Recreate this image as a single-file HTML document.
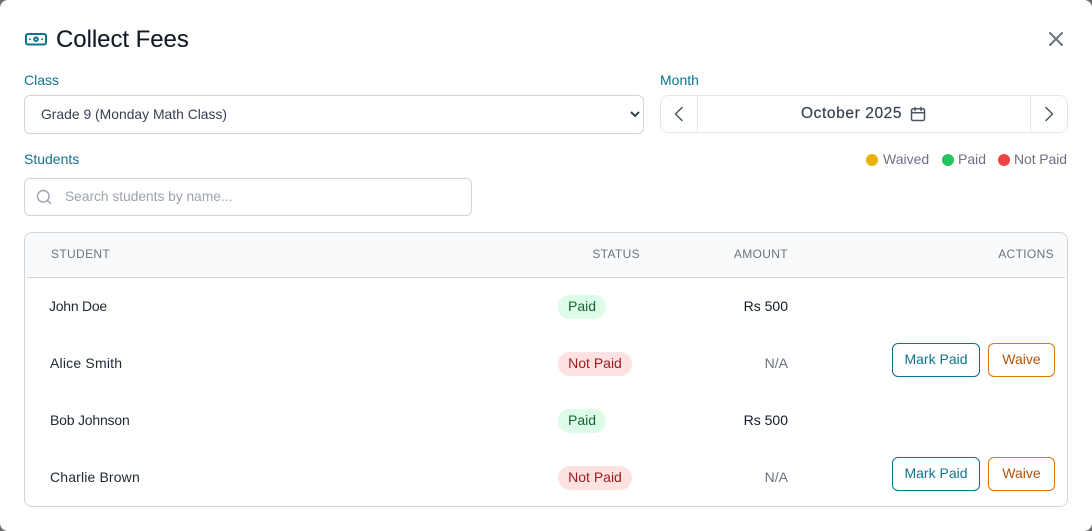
<!DOCTYPE html>
<html><head><meta charset="utf-8"><style>
*{box-sizing:border-box}
html,body{margin:0;padding:0}
body{width:1092px;height:531px;overflow:hidden;background:#6e6e6e;font-family:"Liberation Sans",sans-serif;position:relative}
#m{position:absolute;left:0;top:0;width:1092px;height:531px;background:#fff;border-radius:8px}
.t{position:absolute;white-space:nowrap;line-height:20px;height:20px;font-size:14px}
.r{text-align:right}
.lab{color:#0e7490}
.th{color:#6b7280;font-size:12px;letter-spacing:.35px}
.leg{color:#6b7280}
.dot{position:absolute;width:12px;height:12px;border-radius:50%;top:154px}
.name{color:#1f2937;font-size:14px}
.pill{position:absolute;height:24px;border-radius:12px;font-size:14px;line-height:23px;text-align:center;white-space:nowrap}
.paid{left:558px;width:48px;background:#dcfce7;color:#166534}
.not{left:558px;width:74px;background:#fee2e2;color:#991b1b}
.btn{position:absolute;height:34px;border-radius:6px;background:#fff;font-size:14px;line-height:30px;text-align:center;white-space:nowrap}
.mp{left:892px;width:88px;border:1px solid #0e7490;color:#0e7490}
.wv{left:988px;width:67px;border:1px solid #d97706;color:#b45309}
svg{position:absolute;display:block}
</style></head><body>
<div id="m">
<svg style="left:24px;top:28px" width="24" height="24" viewBox="0 0 24 24" fill="none" stroke="#0e7490" stroke-width="2" stroke-linecap="round" stroke-linejoin="round"><rect x="2" y="6" width="20" height="10.500" rx="2"/><circle cx="12" cy="11.200" r="1.800"/><path d="M6 11.200h.01M18 11.200h.01"/></svg>
<div class="t" style="left:56px;top:25px;height:30px;line-height:30px;font-size:24px;color:#111827;letter-spacing:-.05px;-webkit-text-stroke:.1px #111827">Collect Fees</div>
<svg style="left:1044px;top:27px" width="24" height="24" viewBox="0 0 24 24" fill="none" stroke="#6b7280" stroke-width="2" stroke-linecap="round"><path d="M18 6 6 18M6 6l12 12"/></svg>

<div class="t lab" style="left:24px;top:70px">Class</div>
<select style="position:absolute;left:24px;top:95px;width:620px;height:39px;border:1px solid #d1d5db;border-radius:6px;background:#fff;color:#374151;font:13.900px 'Liberation Sans',sans-serif;padding:0 12px 2px;outline:none"><option>Grade 9 (Monday Math Class)</option></select>

<div class="t lab" style="left:660px;top:70px">Month</div>
<div style="position:absolute;left:660px;top:95px;width:408px;height:38px;border:1px solid #e5e7eb;border-radius:8px"></div>
<div style="position:absolute;left:697px;top:96px;width:1px;height:36px;background:#e5e7eb"></div>
<div style="position:absolute;left:1030px;top:96px;width:1px;height:36px;background:#e5e7eb"></div>
<svg style="left:669px;top:104px" width="20" height="20" viewBox="0 0 20 20" fill="none" stroke="#4b5563" stroke-width="1.500" stroke-linecap="round" stroke-linejoin="round"><path d="M13 3.500 6.500 10l6.500 6.500"/></svg>
<svg style="left:1039px;top:104px" width="20" height="20" viewBox="0 0 20 20" fill="none" stroke="#4b5563" stroke-width="1.500" stroke-linecap="round" stroke-linejoin="round"><path d="M7 3.500 13.500 10 7 16.500"/></svg>
<div class="t" style="left:801px;top:104px;font-size:15.500px;color:#374151;letter-spacing:.6px;-webkit-text-stroke:.2px #374151">October 2025</div>
<svg style="left:910px;top:106px" width="16" height="16" viewBox="0 0 16 16" fill="none" stroke="#4b5563" stroke-width="1.500" stroke-linecap="round" stroke-linejoin="round"><rect x="1.500" y="2.800" width="13" height="11.700" rx="1.500"/><path d="M5 1.500v3M11 1.500v3M1.500 6.800h13"/></svg>

<div class="t lab" style="left:24px;top:149px">Students</div>
<div class="dot" style="left:866px;background:#eab308"></div>
<div class="t leg" style="left:883px;top:149px">Waived</div>
<div class="dot" style="left:942px;background:#22c55e"></div>
<div class="t leg" style="left:958px;top:149px">Paid</div>
<div class="dot" style="left:998px;background:#ef4444"></div>
<div class="t leg" style="left:1014px;top:149px;letter-spacing:-.1px">Not Paid</div>

<div style="position:absolute;left:24px;top:178px;width:448px;height:38px;border:1px solid #d1d5db;border-radius:6px"></div>
<svg style="left:36px;top:189px" width="16" height="16" viewBox="0 0 16 16" fill="none" stroke="#9ca3af" stroke-width="1.400" stroke-linecap="round"><circle cx="7.300" cy="7.300" r="5.800"/><path d="m11.600 11.600 3 3"/></svg>
<div class="t" style="left:65px;top:187px;color:#9ca3af;font-size:13.750px">Search students by name...</div>

<div style="position:absolute;left:24px;top:232px;width:1044px;height:275px;border:1px solid #d1d5db;border-radius:8px;overflow:hidden">
<div style="position:absolute;left:0;top:0;width:1042px;height:44px;background:#f9fafb"></div>
<div style="position:absolute;left:2px;top:44px;width:1038px;height:1px;background:#d1d5db"></div>
</div>
<div class="t th" style="left:51px;top:244px">STUDENT</div>
<div class="t th r" style="left:540px;width:100px;top:244px">STATUS</div>
<div class="t th r" style="left:688px;width:100px;top:244px">AMOUNT</div>
<div class="t th r" style="left:954px;width:100px;top:244px">ACTIONS</div>

<div class="t name" style="left:49px;top:296px;letter-spacing:-.25px">John Doe</div>
<div class="pill paid" style="top:295px">Paid</div>
<div class="t r" style="left:688px;width:100px;top:296px;color:#111827">Rs 500</div>

<div class="t name" style="left:50px;top:353px;letter-spacing:.2px">Alice Smith</div>
<div class="pill not" style="top:352px">Not Paid</div>
<div class="t r" style="left:688px;width:100px;top:353px;color:#6b7280">N/A</div>
<div class="btn mp" style="top:343px">Mark Paid</div>
<div class="btn wv" style="top:343px">Waive</div>

<div class="t name" style="left:50px;top:410px;letter-spacing:-.2px">Bob Johnson</div>
<div class="pill paid" style="top:409px">Paid</div>
<div class="t r" style="left:688px;width:100px;top:410px;color:#111827">Rs 500</div>

<div class="t name" style="left:50px;top:467px;letter-spacing:.15px">Charlie Brown</div>
<div class="pill not" style="top:466px">Not Paid</div>
<div class="t r" style="left:688px;width:100px;top:467px;color:#6b7280">N/A</div>
<div class="btn mp" style="top:457px">Mark Paid</div>
<div class="btn wv" style="top:457px">Waive</div>
</div>
</body></html>
